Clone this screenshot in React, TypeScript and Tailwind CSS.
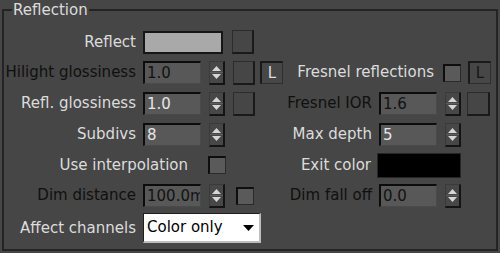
import React from "react";

const ON = "text-[#dcdcdc]";
const OFF = "text-[#101010]";

function Label({ w, text, on = true }: { w: number; text: string; on?: boolean }) {
  return (
    <div
      className={`shrink-0 text-right whitespace-nowrap leading-none ${on ? ON : OFF}`}
      style={{ width: w }}
    >
      {text}
    </div>
  );
}

function Field({ value, on = true }: { value: string; on?: boolean }) {
  return (
    <div
      className={`w-[58px] h-[23px] shrink-0 overflow-hidden whitespace-nowrap bg-[#585858] border-t-2 border-l-2 border-r border-b border-t-[#0c0c0c] border-l-[#0c0c0c] border-r-[#4a4a4a] border-b-[#4a4a4a] pl-[2px] flex items-center leading-none ${
        on ? "text-[#e6e6e6]" : "text-[#121212]"
      }`}
    >
      {value}
    </div>
  );
}

function Spinner() {
  return (
    <div className="w-[16px] h-[24px] shrink-0 flex flex-col border-r-2 border-b-2 border-t border-l border-r-[#141414] border-b-[#141414] border-t-[#3a3a3a] border-l-[#3a3a3a] bg-[#474747]">
      <div className="flex-1 flex items-end justify-center pb-[1px] border-b border-b-[#5e5e5e]">
        <svg width="9" height="5" viewBox="0 0 9 5">
          <polygon points="4.5,0 9,5 0,5" fill="#d6d6d6" />
        </svg>
      </div>
      <div className="flex-1 flex items-start justify-center pt-[1px]">
        <svg width="9" height="5" viewBox="0 0 9 5">
          <polygon points="0,0 9,0 4.5,5" fill="#d6d6d6" />
        </svg>
      </div>
    </div>
  );
}

function MapBox({ w = 22, h = 24 }: { w?: number; h?: number }) {
  return (
    <div
      className="shrink-0 bg-[#464646] border border-[#2c2c2c] border-r-2 border-b-2 border-r-[#1a1a1a] border-b-[#1a1a1a]"
      style={{ width: w, height: h }}
    />
  );
}

function LBtn({ on = true }: { on?: boolean }) {
  return (
    <div
      className={`w-[23px] h-[23px] shrink-0 flex items-center justify-center bg-[#474747] border border-t-2 border-l-2 border-t-[#1a1a1a] border-l-[#1a1a1a] border-r-[#2e2e2e] border-b-[#2e2e2e] leading-none ${
        on ? "text-[#dcdcdc]" : "text-[#161616]"
      }`}
    >
      L
    </div>
  );
}

function Check() {
  return (
    <div className="w-[18px] h-[18px] shrink-0 bg-[#5a5a5a] border-t-2 border-l-2 border-r border-b border-t-[#0e0e0e] border-l-[#0e0e0e] border-r-[#2a2a2a] border-b-[#2a2a2a]" />
  );
}

export default function App() {
  return (
    <div
      className="w-[500px] h-[253px] bg-[#464646] overflow-hidden text-[15px]"
      style={{ fontFamily: '"DejaVu Sans", Verdana, sans-serif' }}
    >
      <fieldset className="mt-[2px] mx-[2px] h-[249px] border-2 border-[#242424]">
        <legend className="ml-[8px] px-[1px] leading-[16px] text-[#dcdcdc]">Reflection</legend>
        <div className="pt-[9px] flex flex-col">
          {/* Row 1 */}
          <div className="h-[30px] flex items-center">
            <Label w={132} text="Reflect" />
            <div className="ml-[7px] w-[80px] h-[23px] shrink-0 bg-[#a9a9a9] border-2 border-[#161616]" />
            <div className="ml-[9px]">
              <MapBox />
            </div>
          </div>
          {/* Row 2 */}
          <div className="h-[31px] flex items-center">
            <Label w={132} text="Hilight glossiness" on={false} />
            <div className="ml-[7px]">
              <Field value="1.0" on={false} />
            </div>
            <div className="ml-[8px]">
              <Spinner />
            </div>
            <div className="ml-[8px]">
              <MapBox />
            </div>
            <div className="ml-[5px]">
              <LBtn />
            </div>
            <Label w={151} text="Fresnel reflections" />
            <div className="ml-[9px]">
              <Check />
            </div>
            <div className="ml-[7px]">
              <LBtn on={false} />
            </div>
          </div>
          {/* Row 3 */}
          <div className="h-[31px] flex items-center">
            <Label w={132} text="Refl. glossiness" />
            <div className="ml-[7px]">
              <Field value="1.0" />
            </div>
            <div className="ml-[8px]">
              <Spinner />
            </div>
            <div className="ml-[8px]">
              <MapBox />
            </div>
            <Label w={117} text="Fresnel IOR" on={false} />
            <div className="ml-[7px]">
              <Field value="1.6" on={false} />
            </div>
            <div className="ml-[8px]">
              <Spinner />
            </div>
            <div className="ml-[6px]">
              <MapBox w={23} />
            </div>
          </div>
          {/* Row 4 */}
          <div className="h-[31px] flex items-center">
            <Label w={132} text="Subdivs" />
            <div className="ml-[7px]">
              <Field value="8" />
            </div>
            <div className="ml-[8px]">
              <Spinner />
            </div>
            <Label w={147} text="Max depth" />
            <div className="ml-[7px]">
              <Field value="5" />
            </div>
            <div className="ml-[8px]">
              <Spinner />
            </div>
          </div>
          {/* Row 5 */}
          <div className="h-[30px] flex items-center">
            <Label w={184} text="Use interpolation" />
            <div className="ml-[20px]">
              <Check />
            </div>
            <Label w={145} text="Exit color" />
            <div className="ml-[6px] w-[84px] h-[25px] shrink-0 bg-black border border-[#262626]" />
          </div>
          {/* Row 6 */}
          <div className="h-[31px] flex items-center">
            <Label w={132} text="Dim distance" on={false} />
            <div className="ml-[7px]">
              <Field value="100.0mm" on={false} />
            </div>
            <div className="ml-[8px]">
              <Spinner />
            </div>
            <div className="ml-[11px]">
              <Check />
            </div>
            <Label w={118} text="Dim fall off" on={false} />
            <div className="ml-[7px]">
              <Field value="0.0" on={false} />
            </div>
            <div className="ml-[8px]">
              <Spinner />
            </div>
          </div>
          {/* Row 7 */}
          <div className="h-[34px] flex items-center">
            <Label w={132} text="Affect channels" />
            <div className="ml-[7px] w-[118px] h-[30px] shrink-0 bg-white border border-[#1e1e1e] border-r-2 border-b-2 border-r-[#bdbdbd] border-b-[#bdbdbd] flex items-center justify-between pl-[3px] pr-[5px] text-black text-[15px] leading-none">
              <span>Color only</span>
              <svg width="11" height="6" viewBox="0 0 11 6">
                <polygon points="0,0 11,0 5.5,6" fill="#000" />
              </svg>
            </div>
          </div>
        </div>
      </fieldset>
    </div>
  );
}
